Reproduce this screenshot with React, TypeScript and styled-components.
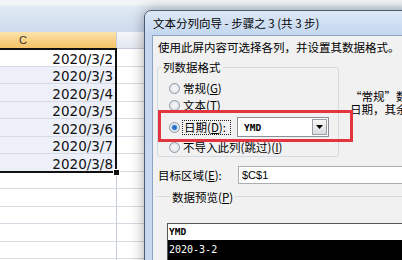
import styled, { createGlobalStyle } from 'styled-components';

const GlobalStyle = createGlobalStyle`
  html, body {
    margin: 0;
    padding: 0;
  }
  body {
    width: 402px;
    height: 260px;
    overflow: hidden;
    background: #fff;
  }
`;

const cjk = `"Noto Sans CJK SC", "DejaVu Sans", sans-serif`;

const Screen = styled.div`
  position: relative;
  width: 402px;
  height: 260px;
  overflow: hidden;
  background: #fff;
`;

/* ---------- spreadsheet ---------- */

const Ribbon = styled.div`
  height: 32px;
  background: linear-gradient(#f2f4f7 0, #f2f4f7 5px, #e1eaf5 6px, #cddbee 100%);
`;

const SheetGrid = styled.div`
  display: flex;
  margin-left: -70px;
`;

const Column = styled.div<{ $width?: number }>`
  width: ${p => (p.$width ? `${p.$width}px` : 'auto')};
  flex: ${p => (p.$width ? 'none' : '1')};
  border-right: 1px solid #c9cfdb;
`;

const ColHeader = styled.div<{ $selected?: boolean }>`
  height: 17px;
  box-sizing: border-box;
  border-bottom: 1px solid ${p => (p.$selected ? '#f0b550' : '#c5cbd6')};
  background: ${p =>
    p.$selected
      ? 'linear-gradient(#fbe3ae, #f8cf7f 60%, #f5c56a)'
      : 'linear-gradient(#f4f6f9, #e3e8ef)'};
  font: 11px "Liberation Sans", sans-serif;
  color: #333;
  line-height: 16px;
  text-align: center;
`;

const Selection = styled.div`
  position: relative;
  outline: 2px solid #111;
  outline-offset: -1px;
`;

const FillHandle = styled.span`
  position: absolute;
  right: -4px;
  bottom: -4px;
  width: 5px;
  height: 5px;
  background: #111;
  border: 1px solid #fff;
`;

const Cell = styled.div<{ $tint?: boolean }>`
  height: 17.5px;
  box-sizing: border-box;
  border-bottom: 1px solid #d7dbe3;
  background: ${p => (p.$tint ? '#edf0f8' : '#fff')};
  display: flex;
  align-items: flex-end;
  justify-content: flex-end;
  padding-right: 3px;
  font: 13.5px "DejaVu Sans", sans-serif;
  line-height: 13px;
  color: #111;
`;

/* ---------- dialog window ---------- */

const Dialog = styled.div`
  position: absolute;
  left: 144px;
  top: 10px;
  width: 290px;
  height: 270px;
  box-sizing: border-box;
  border: 1px solid #4b5b72;
  border-radius: 7px 7px 0 0;
  background: linear-gradient(#dde8f6, #c4d7ef 24px, #c9daf0);
  box-shadow: 0 0 14px rgba(0, 0, 0, 0.35);
  padding-left: 7px;
  display: flex;
  flex-direction: column;
  font-family: ${cjk};
  font-size: 11.5px;
  color: #000;
`;

const TitleBar = styled.div`
  height: 24px;
  line-height: 24px;
  padding-left: 1px;
  white-space: nowrap;
`;

const Body = styled.div`
  flex: 1;
  border: 1px solid #8ea5c2;
  border-right: none;
  background: #f1f1f1;
  display: flex;
  flex-direction: column;
  overflow: hidden;
`;

const Intro = styled.div`
  margin: 3px 0 0 5px;
  line-height: 16px;
  white-space: nowrap;
`;

const FormatRow = styled.div`
  display: flex;
  align-items: flex-start;
  margin-top: 5px;
`;

const GroupBox = styled.fieldset`
  margin: 0 0 0 4px;
  padding: 0;
  width: 182px;
  flex: none;
  box-sizing: border-box;
  min-width: 0;
  border: 1px solid #d3dbe2;
  border-radius: 3px;
`;

const Legend = styled.legend`
  margin-left: 3px;
  padding: 0 2px;
  line-height: 14px;
`;

const RadioList = styled.div`
  display: flex;
  flex-direction: column;
  padding: 5.5px 0 0.5px 11px;
`;

const RadioRow = styled.div<{ $tall?: boolean; $gap?: number }>`
  display: flex;
  align-items: center;
  height: ${p => (p.$tall ? 22 : 17)}px;
  margin-top: ${p => p.$gap ?? 0}px;
  gap: 3px;
  white-space: nowrap;
`;

const Radio = styled.span<{ $checked?: boolean }>`
  width: 11px;
  height: 11px;
  box-sizing: border-box;
  border-radius: 50%;
  border: 1px solid #8e99a5;
  flex: none;
  background: ${p =>
    p.$checked
      ? 'radial-gradient(circle, #1f5fb8 0, #2f78cf 1.8px, #8bb8e8 2.8px, #f3f5f7 3.4px, #d9dee4 100%)'
      : 'radial-gradient(circle, #f6f7f8 0, #e6e9ed 60%, #cfd5dc 100%)'};
`;

const FocusLabel = styled.span`
  width: 49px;
  height: 15px;
  flex: none;
  box-sizing: border-box;
  border: 1px dotted #222;
  line-height: 13px;
  padding-left: 1px;
  margin-left: -1px;
`;

const Combo = styled.div`
  margin-left: 3px;
  width: 92px;
  height: 20px;
  flex: none;
  box-sizing: border-box;
  border: 1px solid #8a8f97;
  background: #fff;
  display: flex;
  align-items: center;
  font: bold 9.5px "DejaVu Sans Mono", monospace;
  padding-left: 6px;
`;

const ComboText = styled.span`
  flex: 1;
`;

const ComboButton = styled.span`
  width: 15px;
  height: 16px;
  margin-right: 1px;
  box-sizing: border-box;
  border: 1px solid #9aa0a8;
  background: linear-gradient(#f7f7f7, #dcdcdc);
  display: flex;
  align-items: center;
  justify-content: center;
`;

const Hint = styled.div`
  margin: 29.5px 0 0 11px;
  line-height: 13.5px;
  white-space: nowrap;
`;

const TargetRow = styled.div`
  display: flex;
  align-items: center;
  height: 18px;
  margin: 8.5px 0 0 5px;
`;

const FieldLabel = styled.span`
  width: 80px;
  flex: none;
  white-space: nowrap;
`;

const TextInput = styled.div`
  flex: 1;
  height: 18px;
  box-sizing: border-box;
  border: 1px solid #abadb3;
  background: #fff;
  padding-left: 3px;
  line-height: 16px;
  font-family: "Liberation Sans", ${cjk};
  font-size: 11px;
`;

const PreviewGroup = styled.fieldset`
  margin: 6px 0 0 4px;
  padding: 0 0 0 10px;
  min-width: 0;
  border: none;
  border-top: 1px solid #d3dbe2;
`;

const PreviewBox = styled.div`
  margin-top: 19px;
  border-top: 1px solid #555;
  border-left: 1px solid #555;
  background: #fff;
  font: bold 9.5px "DejaVu Sans Mono", monospace;
`;

const PreviewLine = styled.div<{ $selected?: boolean }>`
  height: ${p => (p.$selected ? 20 : 16)}px;
  line-height: ${p => (p.$selected ? 20 : 16)}px;
  padding-left: 1px;
  background: ${p => (p.$selected ? '#000' : '#fff')};
  color: ${p => (p.$selected ? '#fff' : '#000')};
  font-weight: ${p => (p.$selected ? 'normal' : 'bold')};
  font-size: ${p => (p.$selected ? '10px' : '9.5px')};
`;

const Highlight = styled.div`
  position: absolute;
  left: 158px;
  top: 110px;
  width: 195px;
  height: 32px;
  box-sizing: border-box;
  border: 3px solid #e3343f;
`;

const dates = ['2020/3/2', '2020/3/3', '2020/3/4', '2020/3/5', '2020/3/6', '2020/3/7', '2020/3/8'];
const emptyRows = 6;

export default function App() {
  return (
    <Screen>
      <GlobalStyle />
      <Ribbon />
      <SheetGrid>
        <Column $width={186}>
          <ColHeader $selected>C</ColHeader>
          <Selection>
            {dates.map((d, i) => (
              <Cell key={d} $tint={i > 0}>
                {d}
              </Cell>
            ))}
            <FillHandle />
          </Selection>
          {Array.from({ length: emptyRows }, (_, i) => (
            <Cell key={i} />
          ))}
        </Column>
        <Column>
          <ColHeader>D</ColHeader>
          {Array.from({ length: dates.length + emptyRows }, (_, i) => (
            <Cell key={i} />
          ))}
        </Column>
      </SheetGrid>

      <Dialog>
        <TitleBar>文本分列向导 - 步骤之 3 (共 3 步)</TitleBar>
        <Body>
          <Intro>使用此屏内容可选择各列，并设置其数据格式。</Intro>
          <FormatRow>
            <GroupBox>
              <Legend>列数据格式</Legend>
              <RadioList>
                <RadioRow>
                  <Radio />
                  <span>
                    常规(<u>G</u>)
                  </span>
                </RadioRow>
                <RadioRow>
                  <Radio />
                  <span>
                    文本(<u>T</u>)
                  </span>
                </RadioRow>
                <RadioRow $tall $gap={2.5}>
                  <Radio $checked />
                  <FocusLabel>
                    日期(<u>D</u>):
                  </FocusLabel>
                  <Combo>
                    <ComboText>YMD</ComboText>
                    <ComboButton>
                      <svg width="7" height="4" viewBox="0 0 7 4">
                        <path d="M0 0h7L3.5 4z" fill="#000" />
                      </svg>
                    </ComboButton>
                  </Combo>
                </RadioRow>
                <RadioRow $gap={0.5}>
                  <Radio />
                  <span>
                    不导入此列(跳过)(<u>I</u>)
                  </span>
                </RadioRow>
              </RadioList>
            </GroupBox>
            <Hint>
              “常规”数据格式
              <br />
              日期，其余数据
            </Hint>
          </FormatRow>
          <TargetRow>
            <FieldLabel>
              目标区域(<u>E</u>):
            </FieldLabel>
            <TextInput>$C$1</TextInput>
          </TargetRow>
          <PreviewGroup>
            <Legend>
              数据预览(<u>P</u>)
            </Legend>
            <PreviewBox>
              <PreviewLine>YMD</PreviewLine>
              <PreviewLine $selected>2020-3-2</PreviewLine>
            </PreviewBox>
          </PreviewGroup>
        </Body>
      </Dialog>
      <Highlight />
    </Screen>
  );
}
